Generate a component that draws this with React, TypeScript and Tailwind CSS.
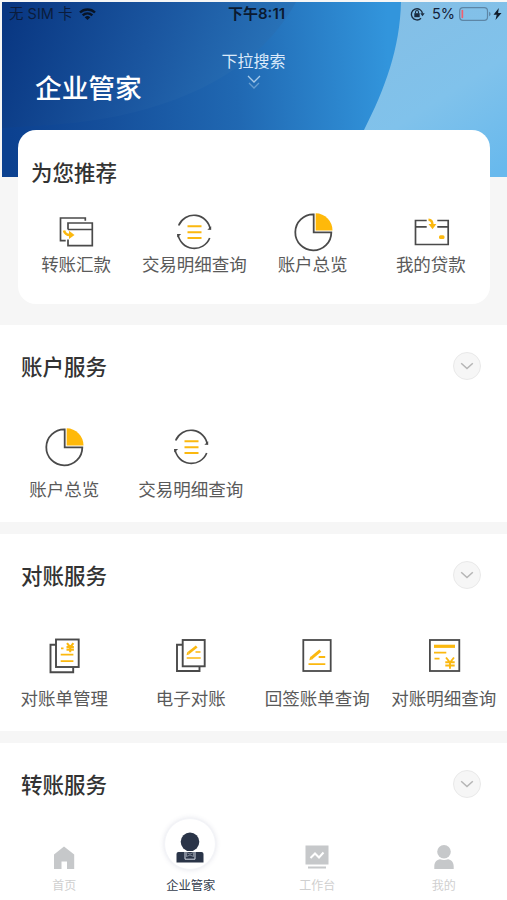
import React from 'react';

const DARK = '#4a4a4a';
const GOLD = '#fbb80f';

function TransferIcon() {
    return (
        <svg className="w-10 h-10" viewBox="0 0 40 40" fill="none" stroke={DARK} strokeWidth="1.7">
            <path d="M29.3 8.8V6H4.5v22.7h5.2" />
            <path d="M12 17.5V11h24.3v22.7H12V27.5M12 17.5h24.3" />
            <path d="M8 18.5c.8 3.200 3 4.500 6 4.500" stroke={GOLD} strokeWidth="2.600" />
            <path d="M13 18.800l5.500 4.200-5.500 4z" fill={GOLD} stroke="none" />
        </svg>
    )
}

function DetailIcon() {
    return (
        <svg className="w-10 h-10" viewBox="0 0 40 40" fill="none" stroke={DARK} strokeWidth="1.7">
            <path d="M4.700 13.500A16.500 16.500 0 0 1 36.300 17.500" />
            <path d="M35.700 26A16.500 16.500 0 0 1 4 22" />
            <path d="M33.300 17.800h3.900v-3.500z" fill={DARK} stroke="none" />
            <path d="M7.200 22H3.200v3.500z" fill={DARK} stroke="none" />
            <path d="M13.500 14.200h14M13.500 20.200h14M13.500 26h14" stroke={GOLD} strokeWidth="1.900" />
        </svg>
    )
}

function PieIcon() {
    return (
        <svg className="w-10 h-10" viewBox="0 0 40 40" fill="none">
            <path d="M20.700 2.400A18 18 0 1 0 38.300 20.400H20.700z" stroke={DARK} strokeWidth="1.800" />
            <path d="M22.700 1.300A17 17 0 0 1 39.500 18.500H22.700z" fill="#ffb90a" />
        </svg>
    )
}

function LoanIcon() {
    return (
        <svg className="w-10 h-10" viewBox="0 0 40 40" fill="none" stroke={DARK} strokeWidth="1.700">
            <path d="M15.700 8.500H4.500v24h32.700v-24H26.300M4.500 14.900h11.200M26.300 14.900h10.900" />
            <path d="M17.500 7.700c2.700 0 4 1.700 4 5.500" stroke={GOLD} strokeWidth="2.500" />
            <path d="M17.500 12h7.900l-3.900 5.300z" fill={GOLD} stroke="none" />
            <rect x="28" y="23.300" width="5.500" height="3.700" rx="1.500" fill={GOLD} stroke="none" />
        </svg>
    )
}

function ManageIcon() {
    return (
        <svg className="w-10 h-10" viewBox="0 0 40 40" fill="none" stroke={DARK} strokeWidth="1.900">
            <path d="M12 8.700H6.500v27.600h22.700V31.500" />
            <rect x="12" y="3.500" width="22.700" height="27.500" />
            <g stroke={GOLD} strokeWidth="1.800">
                <path d="M16.700 18.600h12.700M16.700 25.200h12.700M17 12.300h2.500" />
                <path d="M23 7.200l3.200 4 3.200-4M26.200 11v5.200M22.500 11h7.400M22.500 13.600h7.400" strokeWidth="2.100" />
            </g>
        </svg>
    )
}

function ElectronicIcon() {
    return (
        <svg className="w-10 h-10" viewBox="0 0 40 40" fill="none" stroke={DARK} strokeWidth="1.900">
            <path d="M11.500 8.700H6v26.300h22.500V31" />
            <rect x="11.700" y="4" width="22" height="26.300" />
            <g stroke={GOLD} strokeWidth="1.700">
                <path d="M17.500 17l8.200-6.500" strokeWidth="2.800" />
                <path d="M15.500 19.200l.8-3.500 2.200 2.600z" fill={GOLD} stroke="none" />
                <path d="M24.500 16h5M15.700 22h14" />
            </g>
        </svg>
    )
}

function SignIcon() {
    return (
        <svg className="w-10 h-10" viewBox="0 0 40 40" fill="none" stroke={DARK} strokeWidth="1.800">
            <rect x="6.300" y="4" width="27.400" height="31" />
            <g stroke={GOLD} strokeWidth="1.800">
                <path d="M14.300 22.200l9-7.500" strokeWidth="3" />
                <path d="M12.300 24.200l1-3.600 2.300 2.600z" fill={GOLD} stroke="none" />
                <path d="M21.700 21h6.500M11.500 28.100h16.800" />
            </g>
        </svg>
    )
}

function StatementIcon() {
    return (
        <svg className="w-10 h-10" viewBox="0 0 40 40" fill="none" stroke={DARK} strokeWidth="1.800">
            <rect x="5.900" y="4" width="29.400" height="31" />
            <g stroke={GOLD} strokeWidth="1.800">
                <path d="M10 10.300h21" strokeWidth="3.200" />
                <path d="M10 16.700h12.300M10.500 22.700h5" />
                <path d="M22 21.500l4 5 4-5M26 26v6.800M21.300 26.200h9.400M21.300 29.500h9.400" strokeWidth="1.900" />
            </g>
        </svg>
    )
}

function Item({icon, label}: {icon: React.ReactNode, label: string}) {
    return (
        <div className="flex flex-col items-center">
            {icon}
            <span className="text-[17.5px] leading-[26px] whitespace-nowrap text-[#5a5a5a]">{label}</span>
        </div>
    )
}

function Section({title, children}: {title: string, children?: React.ReactNode}) {
    return (
        <section className="bg-white h-[197px] shrink-0">
            <div className="h-[82px] pl-[21px] pr-[26px] flex items-center justify-between">
                <h2 className="pt-px text-[21.5px] leading-8 font-medium text-[#333333]">{title}</h2>
                <div className="w-7 h-7 rounded-full bg-[#f6f6f6] border border-[#e9e9e9] flex items-center justify-center">
                    <svg className="w-3.5 h-3.5" viewBox="0 0 14 14" fill="none" stroke="#b5b5b5" strokeWidth="1.500">
                        <path d="M1.200 4.200L7 9.500l5.800-5.300" />
                    </svg>
                </div>
            </div>
            <div className="grid grid-cols-4 pl-px pt-5 [&>div]:gap-2.5">{children}</div>
        </section>
    )
}

function StatusBar() {
    return (
        <div className="relative h-7 pl-[9px] pr-[5px] flex items-center justify-between text-[#14223a]">
            <div className="flex items-center gap-[7px]">
                <span className="text-[14.5px] leading-5 text-[#0b1c3c]">无 SIM 卡</span>
                <svg className="w-[17px] h-3" viewBox="0 0 17 12" fill="none" stroke="#081426" strokeWidth="2.400">
                    <path d="M1 4.500a10.700 10.700 0 0 1 15 0M3.700 7.400a6.700 6.700 0 0 1 9.600 0" />
                    <path d="M8.500 12L5.700 9.300a4 4 0 0 1 5.600 0z" fill="#081426" stroke="none" />
                </svg>
            </div>
            <div className="absolute left-[228px] text-[15px] leading-5 font-semibold whitespace-nowrap text-[#0b1a30]">下午8:11</div>
            <div className="flex items-center">
                <svg className="w-[15px] h-[14px]" viewBox="0 0 15 14" fill="none" stroke="#1b2c40" strokeWidth="1.400">
                    <path d="M11 11.200A5.600 5.600 0 1 1 12.500 6.500" />
                    <path d="M10.300 6.200h4.400l-2.200 3z" fill="#1b2c40" stroke="none" />
                    <rect x="4.300" y="6.200" width="5.400" height="4" fill="#1b2c40" stroke="none" />
                    <path d="M5.500 6.500V5a1.500 1.500 0 0 1 3 0v1.500" strokeWidth="1.100" />
                </svg>
                <span className="ml-[7px] text-[14.5px] leading-5">5%</span>
                <svg className="ml-1 w-8 h-[14px]" viewBox="0 0 32 14" fill="none">
                    <rect x="0.700" y="0.700" width="27.800" height="12.600" rx="3.300" stroke="#5d86a6" strokeWidth="1.200" />
                    <path d="M30 4.800v4.400c1.200-.5 1.600-1.300 1.600-2.200S31.200 5.300 30 4.800z" fill="#5d86a6" />
                    <rect x="2.500" y="2.800" width="1.700" height="8.400" rx="0.800" fill="#ee6070" />
                </svg>
                <svg className="ml-0.5 w-[9px] h-3" viewBox="0 0 9 12" fill="#101c2a">
                    <path d="M5.800 0L.5 6.700h3.200L2.500 12 8.500 4.900H5.100z" />
                </svg>
            </div>
        </div>
    )
}

function Banner() {
    return (
        <svg className="absolute left-0.5 top-0.5 w-[505px] h-[175px]" viewBox="2 2 505 175" preserveAspectRatio="none">
            <defs>
                <linearGradient id="lower" gradientUnits="userSpaceOnUse" x1="10" y1="130" x2="390" y2="120">
                    <stop offset="0" stopColor="#0c4190" />
                    <stop offset="0.250" stopColor="#154f9b" />
                    <stop offset="0.600" stopColor="#2068b2" />
                    <stop offset="1" stopColor="#3295dc" />
                </linearGradient>
                <linearGradient id="upper" gradientUnits="userSpaceOnUse" x1="10" y1="10" x2="270" y2="110">
                    <stop offset="0" stopColor="#093782" />
                    <stop offset="0.500" stopColor="#1a559f" />
                    <stop offset="1" stopColor="#2a76bb" />
                </linearGradient>
                <linearGradient id="light" gradientUnits="userSpaceOnUse" x1="390" y1="20" x2="490" y2="177">
                    <stop offset="0" stopColor="#84bfe6" />
                    <stop offset="0.500" stopColor="#80c2eb" />
                    <stop offset="1" stopColor="#68b9ed" />
                </linearGradient>
            </defs>
            <path d="M2 2h505v175H2z" fill="url(#lower)" />
            <path d="M2 2h294C250 85 150 118 50 125L2 128z" fill="url(#upper)" />
            <path d="M401 2C400 48 385 89 364 130v47h143V2z" fill="url(#light)" />
        </svg>
    )
}

function Tab({icon, label}: {icon: React.ReactNode, label: string}) {
    return (
        <div className="h-[75px] flex flex-col items-center justify-end pb-[5px] gap-[7px] text-[#cfcfcf]">
            {icon}
            <span className="text-xs leading-[18px]">{label}</span>
        </div>
    )
}

function TabBar() {
    return (
        <nav className="absolute inset-x-0 bottom-0 h-[84px] pl-px bg-white grid grid-cols-4 items-end">
            <Tab label="首页" icon={
                <svg className="w-6 h-6" viewBox="0 0 24 24" fill="#c6c8ca">
                    <path d="M12 .5L22.200 8.500v14.500H15v-7.500H9.500V23H2V8.500z" />
                </svg>
            } />
            <div className="h-[84px] flex flex-col items-center">
                <div className="mt-0.5 mr-0.5 w-[52px] h-[52px] rounded-full bg-white border border-[#f3f4f8] shadow-[0_0_5px_rgba(80,90,130,0.16)] flex items-center justify-center">
                    <svg className="w-7 h-[31px] mt-1.5" viewBox="0 0 28 31" fill="#2a3448">
                        <circle cx="14" cy="9.800" r="9.300" />
                        <path d="M.5 30.500V22q0-2 2-2h23q2 0 2 2v8.500z" />
                        <path d="M9 20v7.200h10V20" fill="none" stroke="#d5dae5" strokeWidth="1" />
                        <path d="M10.500 20.500L14 22l3.500-1.500v4L14 23l-3.500 1.500z" fill="#2a3448" stroke="#d5dae5" strokeWidth="0.500" />
                    </svg>
                </div>
                <span className="mt-[7px] text-[12.3px] leading-[18px] text-[#343d4d]">企业管家</span>
            </div>
            <Tab label="工作台" icon={
                <svg className="w-6 h-6 mb-px" viewBox="0 0 24 24" fill="#c6c8ca">
                    <path d="M.5.500h23v19H.5zM3 21.500h18v2H3z" />
                    <path d="M5.500 13l4.500-4.500 4 4L18.500 7.500" fill="none" stroke="#fff" strokeWidth="2" />
                </svg>
            } />
            <Tab label="我的" icon={
                <svg className="w-6 h-6 mb-px" viewBox="0 0 24 24" fill="#c6c8ca">
                    <circle cx="12" cy="6.800" r="6.800" />
                    <path d="M2.300 24v-2.500C2.300 17 5 14.800 8 14.300c2.500 1 5.500 1 8 0 3 .5 5.700 2.700 5.700 7.200V24z" />
                </svg>
            } />
        </nav>
    )
}

export default function App() {
    return (
        <div className="relative w-[507px] h-[900px] overflow-hidden bg-[#f6f6f6] flex flex-col font-['Inter','Noto_Sans_CJK_SC',sans-serif]">
            <header className="relative h-[130px] shrink-0">
                <Banner />
                <StatusBar />
                <div className="absolute inset-x-0 top-[49px] flex flex-col items-center text-[#dceafa]">
                    <span className="text-base leading-6">下拉搜索</span>
                    <svg className="mt-0.5 w-3.5 h-4" viewBox="0 0 14 16" fill="none" stroke="#a9cbea" strokeWidth="1.300">
                        <path d="M1 1l6 6 6-6" />
                        <path d="M2 8l5 5 5-5" opacity="0.500" />
                    </svg>
                </div>
                <h1 className="relative pl-[35px] pt-10 text-[26.7px] leading-10 font-medium text-white">企业管家</h1>
            </header>
            <section className="relative ml-[18px] w-[472px] h-[174px] shrink-0 rounded-[18px] bg-white">
                <h2 className="pl-[13px] pt-[27px] text-[21.5px] leading-8 font-medium text-[#333333]">为您推荐</h2>
                <div className="-ml-px pt-[23px] grid grid-cols-4">
                    <Item icon={<TransferIcon />} label="转账汇款" />
                    <Item icon={<DetailIcon />} label="交易明细查询" />
                    <Item icon={<PieIcon />} label="账户总览" />
                    <Item icon={<LoanIcon />} label="我的贷款" />
                </div>
            </section>
            <main className="pt-[21px] flex flex-col gap-3">
                <Section title="账户服务">
                    <Item icon={<PieIcon />} label="账户总览" />
                    <Item icon={<DetailIcon />} label="交易明细查询" />
                </Section>
                <Section title="对账服务">
                    <Item icon={<ManageIcon />} label="对账单管理" />
                    <Item icon={<ElectronicIcon />} label="电子对账" />
                    <Item icon={<SignIcon />} label="回签账单查询" />
                    <Item icon={<StatementIcon />} label="对账明细查询" />
                </Section>
                <Section title="转账服务" />
            </main>
            <TabBar />
        </div>
    )
}
